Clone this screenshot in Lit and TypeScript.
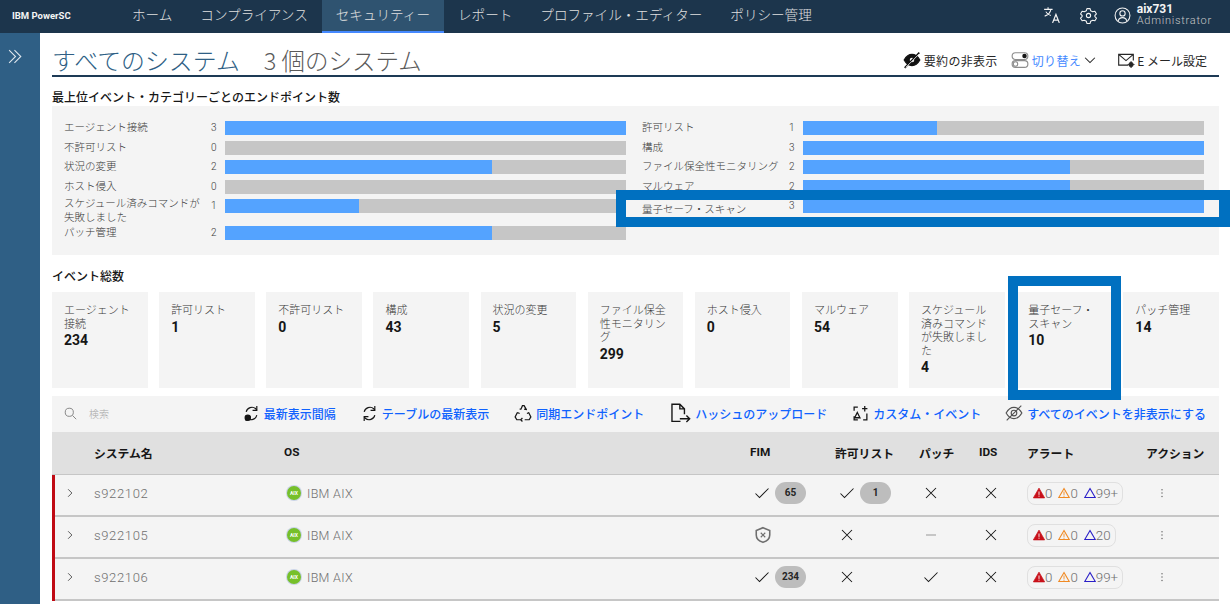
import { LitElement, html, css, svg } from "lit";
import { customElement } from "lit/decorators.js";

const barsL: [string, number][] = [
  ["エージェント接続", 3], ["不許可リスト", 0], ["状況の変更", 2], ["ホスト侵入", 0],
  ["スケジュール済みコマンドが失敗しました", 1], ["パッチ管理", 2],
];
const barsR: [string, number][] = [
  ["許可リスト", 1], ["構成", 3], ["ファイル保全性モニタリング", 2], ["マルウェア", 2], ["量子セーフ・スキャン", 3],
];
const cards: [string, string][] = [
  ["エージェント接続", "234"], ["許可リスト", "1"], ["不許可リスト", "0"], ["構成", "43"], ["状況の変更", "5"],
  ["ファイル保全性モニタリング", "299"], ["ホスト侵入", "0"], ["マルウェア", "54"],
  ["スケジュール済みコマンドが失敗しました", "4"], ["量子セーフ・スキャン", "10"], ["パッチ管理", "14"],
];
const nav = ["ホーム", "コンプライアンス", "セキュリティー", "レポート", "プロファイル・エディター", "ポリシー管理"];

const ic = (w: number, body: unknown, sw = 2) =>
  html`<svg width=${w} height=${w} viewBox="0 0 32 32" fill="none" stroke="currentColor" stroke-width=${sw}>${body}</svg>`;

const check = () => ic(16, svg`<path d="M3 17l8 8L29 7"/>`, 2.1);
const cross = () => ic(16, svg`<path d="M6 6l20 20M26 6L6 26"/>`, 2.1);
const sync = svg`<path d="M6 13a11 11 0 0 1 18-6l2 3M26 19a11 11 0 0 1-18 6l-2-3"/><path d="M26 2v8h-8M6 30v-8h8"/>`;

const tools = [
  { c: "", t: "最新表示間隔", i: ic(17, svg`${sync}<circle cx="9" cy="24" r="5" fill="currentColor"/>`, 2.2) },
  { c: "", t: "テーブルの最新表示", i: ic(17, sync, 2.2) },
  { c: "", t: "同期エンドポイント", i: ic(18, svg`<path d="M12 10l3-7h3l4 7M26 15l4 8-3 5h-8M12 28H5l-3-5 4-8M10 9h3M23 10l-5-1M6 15l4 2M27 15l-4 2M12 28l3-3M12 28l3 3"/>`, 2.2) },
  { c: "wide", t: "ハッシュのアップロード", i: ic(21, svg`<path d="M16 28H3V2h12l7 7v8M15 2v7h7M15 24h15M25 19l5 5-5 5"/>`, 2.1) },
  { c: "", t: "カスタム・イベント", i: ic(17, svg`<path d="M11 4H4v7M4 21v7h7M28 16v12h-7M24 2v10M19 7h10M10 14l5 10H5z"/>`, 2.4) },
  { c: "narrow", t: "すべてのイベントを非表示にする", i: html`<span class="grey">${ic(18, svg`<path d="M2 16c4-7 9-10 14-10s10 3 14 10c-4 7-9 10-14 10S6 23 2 16z"/><circle cx="16" cy="16" r="5"/><path d="M3 29L29 3"/>`)}</span>` },
];

type Row = { n: string; fim: string | null; fimv?: string; allow?: string; patch: string; info: string };
const rows: Row[] = [
  { n: "s922102", fim: "check", fimv: "65", allow: "1", patch: "x", info: "99+" },
  { n: "s922105", fim: "shield", patch: "dash", info: "20" },
  { n: "s922106", fim: "check", fimv: "234", patch: "check", info: "99+" },
];

@customElement("app-root")
export class AppRoot extends LitElement {
  static styles = css`
    :host { display: block; width: 1230px; height: 604px; overflow: hidden; position: relative; background: #fff;
      font-family: "Noto Sans CJK JP", Roboto, sans-serif; color: #161616; }
    .top { height: 33px; background: #1c354c; display: flex; align-items: center; color: #e0e0e0; }
    .logo { width: 118px; box-sizing: border-box; padding: 0 0 3px 12px; font: 700 9.5px Roboto, sans-serif; color: #f4f4f4; }
    .nav { display: flex; height: 33px; font-size: 13.58px; font-weight: 300; }
    .nav div { padding: 0 14px 6px; display: flex; align-items: center; box-sizing: border-box; height: 33px; white-space: nowrap; }
    .nav .on { background: #2f5370; border-bottom: 2px solid #4589ff; padding-bottom: 4px; }
    .topr { margin-left: auto; display: flex; align-items: center; padding: 0 18px 3px 0; color: #f4f4f4; }
    .topr svg { flex: none; }
    .user { margin-left: 6px; line-height: 12px; font-family: Roboto, sans-serif; }
    .user b { display: block; font-size: 12px; font-weight: 700; }
    .user span { display: block; font-size: 11px; letter-spacing: .75px; color: #c6c6c6; font-weight: 300; }
    .body { display: flex; }
    .side { width: 40px; height: 571px; flex: none; background: #2f5f85; color: #dfe7ee; padding: 13px 0 0 7px; box-sizing: border-box; }
    .main { width: 1167px; margin-left: 12px; }
    .titlebar { height: 44px; box-sizing: border-box; border-bottom: 2px solid #1d3a55; display: flex; align-items: flex-end; }
    h1 { margin: 0; font-size: 23.9px; font-weight: 300; line-height: 30px; color: #2f5f85; white-space: nowrap; }
    h1 span { color: #5a5a5a; margin-left: 24px; font-size: 23.5px; }
    .acts { margin-left: auto; display: flex; align-items: center; height: 28px; font-size: 12px; font-weight: 400; margin-bottom: 1px; color: #262626; padding-right: 12px; white-space: nowrap; }
    .acts svg { flex: none; }
    .blue { color: #4589ff; letter-spacing: .4px; }
    .sum { letter-spacing: .3px; margin-left: 3px; }
    h2 { margin: 0; font-size: 12px; line-height: 16px; font-weight: 500; color: #161616; white-space: nowrap; }
    .h1st { margin-top: 12px; }
    .panel { margin-top: 1px; height: 149px; background: #f4f4f4; box-sizing: border-box; padding: 15px 15px 0 12px; display: grid; grid-template-columns: 562px 562px; column-gap: 16px; align-content: start; }
    .col { display: flex; flex-direction: column; }
    .bar-row { display: grid; grid-template-columns: 140px 21px 401px; height: 19.6px; align-items: start; font-size: 10.5px; line-height: 14px; font-weight: 300; color: #393939; }
    .bar-row.tall { height: 27px; }
    .bar-row .lab { line-height: 14px; margin-top: -1px; }
    .bar-row.mid .lab { margin-top: 3px; white-space: nowrap; }
    .bar-row.tall .lab { margin-top: -3px; }
    .num { font: 300 10px/14px Roboto, sans-serif; padding-left: 7px; color: #393939; }
    .track { height: 14px; background: #c6c6c6; }
    .fill { height: 14px; background: #54a3ff; }
    .h2nd { margin-top: 13px; }
    .cards { margin-top: 8px; display: grid; grid-template-columns: repeat(11, 1fr); column-gap: 11.5px; height: 96px; }
    .card { background: #f4f4f4; padding: 11px 12px 0 12px; font-size: 11px; line-height: 13.5px; font-weight: 300; color: #393939; min-width: 0; overflow-wrap: anywhere; }
    .card b { display: block; font: 700 14px/17px Roboto, sans-serif; color: #161616; margin-top: 2px; }
    .tool { margin-top: 8px; height: 36px; box-sizing: border-box; background: #f4f4f4; display: flex; align-items: center; padding: 0 13px 2px 12px; }
    .search { display: flex; align-items: center; gap: 12px; color: #6f6f6f; font-size: 10px; font-weight: 300; }
    .search span { color: #a8a8a8; }
    .tools { margin-left: auto; display: flex; gap: 25px; }
    .ti { display: flex; align-items: center; gap: 4px; color: #0f62fe; font-size: 12px; font-weight: 500; white-space: nowrap; }
    .ti.wide { margin-left: 1px; }
    .ti.narrow { margin-left: -1px; }
    .ti svg { color: #161616; flex: none; display: block; }
    .ti .grey svg { color: #525252; }
    .grid { display: grid; grid-template-columns: 42px 190px 466px 85px 84px 60px 48px 119px 73px; align-items: center; }
    .thead { height: 43px; background: #e0e0e0; border-bottom: 1px solid #c6c6c6; box-sizing: border-box; padding-bottom: 2px; font-size: 11.8px; font-weight: 700; color: #161616; font-family: Roboto, "Noto Sans CJK JP", sans-serif; white-space: nowrap; }
    .tr { height: 42px; background: #f4f4f4; border-bottom: 2px solid #c6c6c6; box-sizing: border-box; padding-bottom: 4px; position: relative; color: #6f6f6f; }
    .tr::before { content: ""; position: absolute; left: 0; top: 0; bottom: -2px; width: 3px; background: #c00a14; }
    .chev { padding-left: 13px; color: #393939; display: flex; }
    .name { font: 300 13px Roboto, sans-serif; letter-spacing: .65px; color: #6f6f6f; }
    .os { display: flex; align-items: center; font: 300 12.5px Roboto, sans-serif; letter-spacing: .3px; color: #6f6f6f; padding-left: 3px; gap: 6px; }
    .aix { width: 14px; height: 14px; border-radius: 50%; background: #76c02a; color: #fff; font: 700 5px/14px Roboto, sans-serif; text-align: center; box-shadow: 0 0 0 1px #c9d3e6; letter-spacing: 0; }
    .cell { display: flex; align-items: center; padding-left: 4px; color: #161616; }
    .cell svg { flex: none; }
    .ck { margin-left: 0; display: flex; }
    .badge { width: 31px; height: 22px; border-radius: 11px; background: #bdbdbd; margin-left: 5px; font: 700 10px/22px Roboto, sans-serif; text-align: center; color: #262626; }
    .dash { width: 10px; height: 1.5px; background: #c6c6c6; margin-left: 3px; }
    .pill { justify-self: start; display: inline-flex; align-items: center; height: 23px; border: 1px solid #e0e0e0; border-radius: 8px; padding: 0 4px 0 5px; box-sizing: border-box; font: 300 13.3px Roboto, sans-serif; color: #6f6f6f; white-space: nowrap; }
    .pill span { margin-right: 6px; display: inline-flex; align-items: center; }
    .pill span:last-child { margin-right: 0; }
    .dots { padding-left: 10px; color: #6f6f6f; display: flex; }
    .frame { position: absolute; border: 10px solid #0070c0; box-sizing: border-box; pointer-events: none; }
    .f1 { left: 616px; top: 190px; width: 614px; height: 37px; border-right-width: 11px; }
    .f2 { left: 1008px; top: 276px; width: 113px; height: 124px; }
    .gap3 { margin-left: 3px; }
    .chv { margin-left: 3px; display: flex; }
    .sp13 { width: 13px; }
    .sp21 { width: 21px; }
    .sp19 { width: 19px; }
    .sp17 { width: 17px; }
    .ml2 { margin-left: 2px; }
  `;

  private bar(r: [string, number]) {
    const long = r[0].length > 15;
    const quantum = r[0].startsWith("量子");
    return html`<div class="bar-row ${long ? "tall" : ""} ${quantum ? "mid" : ""}">
      <div class="lab">${r[0]}</div>
      <div class="num">${r[1]}</div>
      <div class="track"><div class="fill" style="width:${(r[1] / 3) * 100}%"></div></div>
    </div>`;
  }

  private tri(color: string, kind: "fill" | "warn" | "out", n: string) {
    const body =
      kind === "fill"
        ? svg`<path d="M16 3L31 29H1z" fill=${color} stroke=${color}/><path d="M16 12v9M16 23v3" stroke="#fff" stroke-width="2.4"/>`
        : kind === "warn"
          ? svg`<path d="M16 4L30 28H2z" stroke=${color} stroke-width="3"/><path d="M16 12v9M16 23v3" stroke=${color} stroke-width="2.4"/>`
          : svg`<path d="M16 4L30 28H2z" stroke=${color} stroke-width="3"/>`;
    return html`<span>${ic(12, body)}${n}</span>`;
  }

  private mark(k: string) {
    if (k === "check") return check();
    if (k === "x") return cross();
    return html`<div class="dash"></div>`;
  }

  render() {
    return html`
      <div class="top">
        <div class="logo">IBM PowerSC</div>
        <div class="nav">${nav.map((n, i) => html`<div class=${i === 2 ? "on" : ""}>${n}</div>`)}</div>
        <div class="topr">
          ${ic(18, svg`<path d="M2 6h15M9 2v4M14 6c-1 6-5 10-11 12M5 10c2 4 5 6 9 7" stroke-width="1.9"/><path d="M17 30l6-15 6 15M19 25h8" stroke-width="2.2"/>`)}
          <span class="sp19"></span>
          ${ic(17, svg`<circle cx="16" cy="16" r="4"/><path d="M13 3h6l1 4 4 2 4-1 3 5-3 3v2l3 3-3 5-4-1-4 2-1 4h-6l-1-4-4-2-4 1-3-5 3-3v-2L1 13l3-5 4 1 4-2z" stroke-linejoin="round"/>`)}
          <span class="sp17"></span>
          ${ic(17, svg`<circle cx="16" cy="16" r="14"/><circle cx="16" cy="12" r="5"/><path d="M8 26c1-4 4-6 8-6s7 2 8 6"/>`)}
          <div class="user"><b>aix731</b><span>Administrator</span></div>
        </div>
      </div>
      <div class="body">
        <div class="side">${ic(17, svg`<path d="M4 4l12 12L4 28M14 4l12 12-12 12"/>`)}</div>
        <div class="main">
          <div class="titlebar">
            <h1>すべてのシステム<span>3 個のシステム</span></h1>
            <div class="acts">
              ${ic(18, svg`<path d="M2 16c4-7 9-10 14-10s10 3 14 10c-4 7-9 10-14 10S6 23 2 16z" fill="#111" stroke="#111"/><circle cx="16" cy="16" r="4" fill="#fff" stroke="none"/><path d="M3 30L29 3" stroke="#111" stroke-width="3"/><path d="M5 29L29 5" stroke="#fff" stroke-width="1.4"/>`)}
              <span class="sum">要約の非表示</span>
              <span class="sp13"></span>
              ${ic(18, svg`<rect x="2" y="3" width="28" height="12" rx="6" stroke="#8d8d8d"/><rect x="2" y="17" width="28" height="12" rx="6" stroke="#8d8d8d"/><circle cx="24" cy="9" r="4" fill="#161616" stroke="none"/><circle cx="8" cy="23" r="4" stroke="#8d8d8d"/>`)}
              <span class="blue gap3">切り替え</span>
              <span class="chv">${ic(12, svg`<path d="M3 10l13 13 13-13"/>`, 2.8)}</span>
              <span class="sp21"></span>
              ${ic(18, svg`<path d="M20 25H3V6h26v11M3 6l13 11L29 6"/><circle cx="25" cy="24" r="3.5" fill="currentColor"/><path d="M25 18v2M25 28v2M19 24h2M29 24h2"/>`)}
              <span class="ml2">E メール設定</span>
            </div>
          </div>
          <h2 class="h1st">最上位イベント・カテゴリーごとのエンドポイント数</h2>
          <div class="panel">
            <div class="col">${barsL.map(r => this.bar(r))}</div>
            <div class="col">${barsR.map(r => this.bar(r))}</div>
          </div>
          <h2 class="h2nd">イベント総数</h2>
          <div class="cards">${cards.map(c => html`<div class="card">${c[0]}<b>${c[1]}</b></div>`)}</div>
          <div class="tool">
            <div class="search">${ic(13, svg`<circle cx="13" cy="13" r="10"/><path d="M21 21l9 9"/>`)}<span>検索</span></div>
            <div class="tools">${tools.map(t => html`<div class="ti ${t.c}">${t.i}<span>${t.t}</span></div>`)}</div>
          </div>
          <div class="grid thead">
            <span></span><span>システム名</span><span>OS</span><span>FIM</span><span>許可リスト</span><span>パッチ</span><span>IDS</span><span>アラート</span><span>アクション</span>
          </div>
          ${rows.map(r => html`<div class="grid tr">
            <div class="chev">${ic(10, svg`<path d="M10 4l12 12-12 12"/>`, 2.6)}</div>
            <div class="name">${r.n}</div>
            <div class="os"><div class="aix">AIX</div>IBM AIX</div>
            <div class="cell">
              ${r.fim === "shield"
                ? ic(18, svg`<path d="M16 3l12 5v8c0 7-5 11-12 13C9 27 4 23 4 16V8z" stroke="#6f6f6f" stroke-width="2.8"/><path d="M12 12l8 8M20 12l-8 8" stroke="#6f6f6f"/>`)
                : html`<span class="ck">${check()}</span><div class="badge">${r.fimv}</div>`}
            </div>
            <div class="cell">
              ${r.allow ? html`${check()}<div class="badge">${r.allow}</div>` : cross()}
            </div>
            <div class="cell">${this.mark(r.patch)}</div>
            <div class="cell">${cross()}</div>
            <div class="pill">
              ${this.tri("#c8101a", "fill", "0")}
              ${this.tri("#f08a24", "warn", "0")}
              ${this.tri("#2a1fc7", "out", r.info)}
            </div>
            <div class="dots">${ic(12, svg`<circle cx="16" cy="7" r="2" fill="currentColor" stroke="none"/><circle cx="16" cy="16" r="2" fill="currentColor" stroke="none"/><circle cx="16" cy="25" r="2" fill="currentColor" stroke="none"/>`)}</div>
          </div>`)}
        </div>
      </div>
      <div class="frame f1"></div>
      <div class="frame f2"></div>
    `;
  }
}
